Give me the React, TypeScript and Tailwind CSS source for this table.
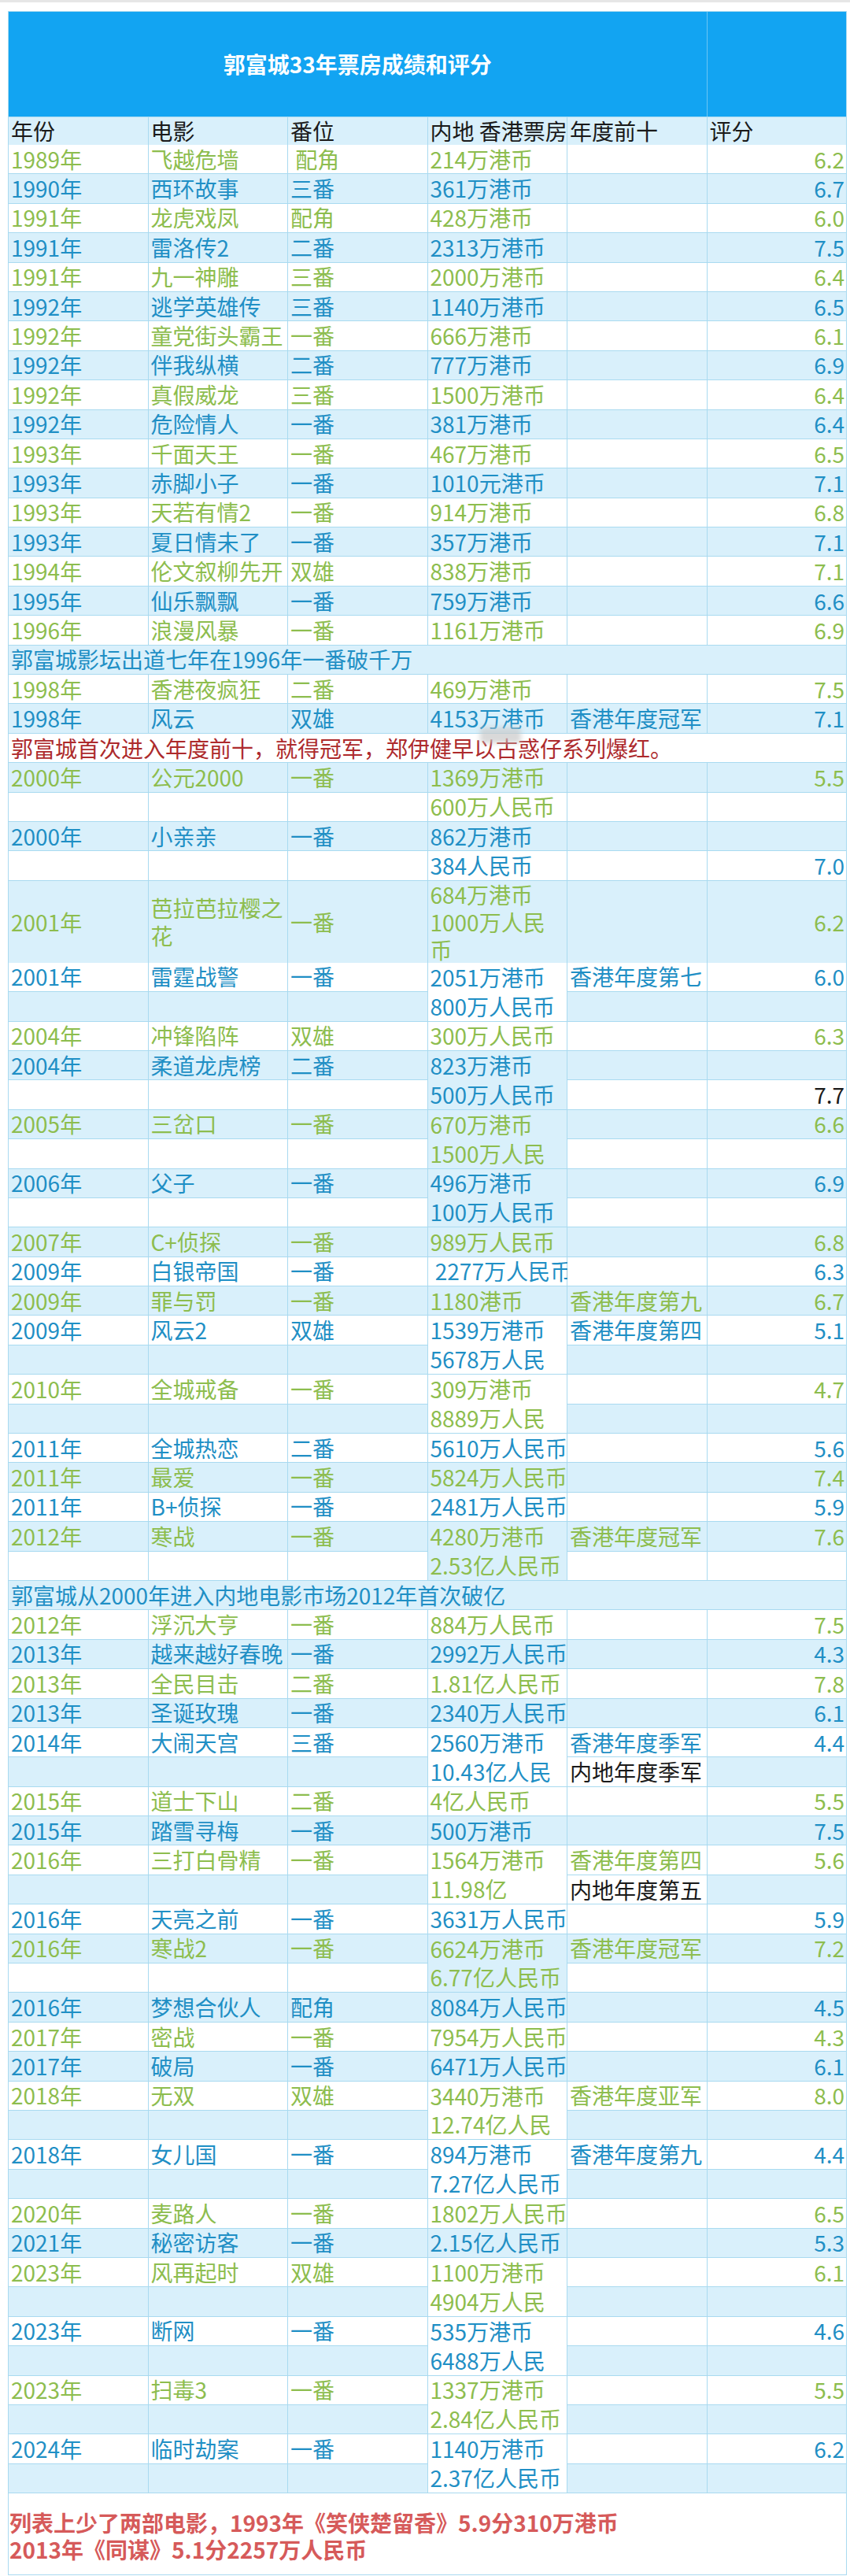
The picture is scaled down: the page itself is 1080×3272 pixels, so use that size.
import React from 'react';

type BgKey = 'w' | 'b';
type FgKey = 'g' | 'b' | 'k' | 'r';

const BG: Record<BgKey, string> = { w: 'bg-white', b: 'bg-[#d9f0fb]' };
const FG: Record<FgKey, string> = {
  g: 'text-[#8dbd4e]',
  b: 'text-[#1f8fc5]',
  k: 'text-[#1a1a1a]',
  r: 'text-[#ad2a2c]',
};

const CELL = 'flex items-center border-r border-b border-[#a9daf0] whitespace-pre';
const LEFT = 'pl-[3px]';
const RIGHT = 'justify-end pr-[2px]';

type RowBlock = { k: 'row'; c: string[]; bg: BgKey; fg: FgKey; tall?: boolean };
type NoteBlock = { k: 'note'; t: string; bg: BgKey; fg: FgKey; blur?: boolean };
type DoubleBlock = {
  k: 'double';
  c: string[];
  bg: BgKey;
  fg: FgKey;
  sub: string;
  subBg: BgKey;
  s5?: string;
  s6?: string;
  s5Bg?: BgKey;
  s5Fg?: FgKey;
  s6Fg?: FgKey;
};
type Block = RowBlock | NoteBlock | DoubleBlock;

const R = (c: string[], bg: BgKey, fg: FgKey): RowBlock => ({ k: 'row', c, bg, fg });
const D = (
  c: string[],
  bg: BgKey,
  fg: FgKey,
  sub: string,
  subBg: BgKey,
  extra: Partial<DoubleBlock> = {}
): DoubleBlock => ({ k: 'double', c, bg, fg, sub, subBg, ...extra });

const blocks: Block[] = [
  R(['1989年', '飞越危墙', ' 配角', '214万港币', '', '6.2'], 'w', 'g'),
  R(['1990年', '西环故事', '三番', '361万港币', '', '6.7'], 'b', 'b'),
  R(['1991年', '龙虎戏凤', '配角', '428万港币', '', '6.0'], 'w', 'g'),
  R(['1991年', '雷洛传2', '二番', '2313万港币', '', '7.5'], 'b', 'b'),
  R(['1991年', '九一神雕', '三番', '2000万港币', '', '6.4'], 'w', 'g'),
  R(['1992年', '逃学英雄传', '三番', '1140万港币', '', '6.5'], 'b', 'b'),
  R(['1992年', '童党街头霸王', '一番', '666万港币', '', '6.1'], 'w', 'g'),
  R(['1992年', '伴我纵横', '二番', '777万港币', '', '6.9'], 'b', 'b'),
  R(['1992年', '真假威龙', '三番', '1500万港币', '', '6.4'], 'w', 'g'),
  R(['1992年', '危险情人', '一番', '381万港币', '', '6.4'], 'b', 'b'),
  R(['1993年', '千面天王', '一番', '467万港币', '', '6.5'], 'w', 'g'),
  R(['1993年', '赤脚小子', '一番', '1010元港币', '', '7.1'], 'b', 'b'),
  R(['1993年', '天若有情2', '一番', '914万港币', '', '6.8'], 'w', 'g'),
  R(['1993年', '夏日情未了', '一番', '357万港币', '', '7.1'], 'b', 'b'),
  R(['1994年', '伦文叙柳先开', '双雄', '838万港币', '', '7.1'], 'w', 'g'),
  R(['1995年', '仙乐飘飘', '一番', '759万港币', '', '6.6'], 'b', 'b'),
  R(['1996年', '浪漫风暴', '一番', '1161万港币', '', '6.9'], 'w', 'g'),
  { k: 'note', t: '郭富城影坛出道七年在1996年一番破千万', bg: 'b', fg: 'b' },
  R(['1998年', '香港夜疯狂', '二番', '469万港币', '', '7.5'], 'w', 'g'),
  R(['1998年', '风云', '双雄', '4153万港币', '香港年度冠军', '7.1'], 'b', 'b'),
  { k: 'note', t: '郭富城首次进入年度前十，就得冠军，郑伊健早以古惑仔系列爆红。', bg: 'w', fg: 'r', blur: true },
  R(['2000年', '公元2000', '一番', '1369万港币', '', '5.5'], 'b', 'g'),
  R(['', '', '', '600万人民币', '', ''], 'w', 'g'),
  R(['2000年', '小亲亲', '一番', '862万港币', '', ''], 'b', 'b'),
  R(['', '', '', '384人民币', '', '7.0'], 'w', 'b'),
  { k: 'row', c: ['2001年', '芭拉芭拉樱之\n花', '一番', '684万港币\n1000万人民\n币', '', '6.2'], bg: 'b', fg: 'g', tall: true },
  D(['2001年', '雷霆战警', '一番', '2051万港币', '香港年度第七', '6.0'], 'w', 'b', '800万人民币', 'b'),
  R(['2004年', '冲锋陷阵', '双雄', '300万人民币', '', '6.3'], 'w', 'g'),
  D(['2004年', '柔道龙虎榜', '二番', '823万港币', '', ''], 'b', 'b', '500万人民币', 'w', { s6: '7.7', s6Fg: 'k' }),
  D(['2005年', '三岔口', '一番', '670万港币', '', '6.6'], 'b', 'g', '1500万人民', 'w'),
  D(['2006年', '父子', '一番', '496万港币', '', '6.9'], 'b', 'b', '100万人民币', 'w'),
  R(['2007年', 'C+侦探', '一番', '989万人民币', '', '6.8'], 'b', 'g'),
  R(['2009年', '白银帝国', '一番', ' 2277万人民币', '', '6.3'], 'w', 'b'),
  R(['2009年', '罪与罚', '一番', '1180港币', '香港年度第九', '6.7'], 'b', 'g'),
  D(['2009年', '风云2', '双雄', '1539万港币', '香港年度第四', '5.1'], 'w', 'b', '5678万人民', 'b'),
  D(['2010年', '全城戒备', '一番', '309万港币', '', '4.7'], 'w', 'g', '8889万人民', 'b'),
  R(['2011年', '全城热恋', '二番', '5610万人民币', '', '5.6'], 'w', 'b'),
  R(['2011年', '最爱', '一番', '5824万人民币', '', '7.4'], 'b', 'g'),
  R(['2011年', 'B+侦探', '一番', '2481万人民币', '', '5.9'], 'w', 'b'),
  D(['2012年', '寒战', '一番', '4280万港币', '香港年度冠军', '7.6'], 'b', 'g', '2.53亿人民币', 'w'),
  { k: 'note', t: '郭富城从2000年进入内地电影市场2012年首次破亿', bg: 'b', fg: 'b' },
  R(['2012年', '浮沉大亨', '一番', '884万人民币', '', '7.5'], 'w', 'g'),
  R(['2013年', '越来越好春晚', '一番', '2992万人民币', '', '4.3'], 'b', 'b'),
  R(['2013年', '全民目击', '二番', '1.81亿人民币', '', '7.8'], 'w', 'g'),
  R(['2013年', '圣诞玫瑰', '一番', '2340万人民币', '', '6.1'], 'b', 'b'),
  D(['2014年', '大闹天宫', '三番', '2560万港币', '香港年度季军', '4.4'], 'w', 'b', '10.43亿人民', 'b', {
    s5: '内地年度季军',
    s5Bg: 'w',
    s5Fg: 'k',
  }),
  R(['2015年', '道士下山', '二番', '4亿人民币', '', '5.5'], 'w', 'g'),
  R(['2015年', '踏雪寻梅', '一番', '500万港币', '', '7.5'], 'b', 'b'),
  D(['2016年', '三打白骨精', '一番', '1564万港币', '香港年度第四', '5.6'], 'w', 'g', '11.98亿', 'b', {
    s5: '内地年度第五',
    s5Bg: 'w',
    s5Fg: 'k',
  }),
  R(['2016年', '天亮之前', '一番', '3631万人民币', '', '5.9'], 'w', 'b'),
  D(['2016年', '寒战2', '一番', '6624万港币', '香港年度冠军', '7.2'], 'b', 'g', '6.77亿人民币', 'w'),
  R(['2016年', '梦想合伙人', '配角', '8084万人民币', '', '4.5'], 'b', 'b'),
  R(['2017年', '密战', '一番', '7954万人民币', '', '4.3'], 'w', 'g'),
  R(['2017年', '破局', '一番', '6471万人民币', '', '6.1'], 'b', 'b'),
  D(['2018年', '无双', '双雄', '3440万港币', '香港年度亚军', '8.0'], 'w', 'g', '12.74亿人民', 'b'),
  D(['2018年', '女儿国', '一番', '894万港币', '香港年度第九', '4.4'], 'w', 'b', '7.27亿人民币', 'b'),
  R(['2020年', '麦路人', '一番', '1802万人民币', '', '6.5'], 'w', 'g'),
  R(['2021年', '秘密访客', '一番', '2.15亿人民币', '', '5.3'], 'b', 'b'),
  D(['2023年', '风再起时', '双雄', '1100万港币', '', '6.1'], 'w', 'g', '4904万人民', 'b'),
  D(['2023年', '断网', '一番', '535万港币', '', '4.6'], 'w', 'b', '6488万人民', 'b'),
  D(['2023年', '扫毒3', '一番', '1337万港币', '', '5.5'], 'w', 'g', '2.84亿人民币', 'b'),
  D(['2024年', '临时劫案', '一番', '1140万港币', '', '6.2'], 'w', 'b', '2.37亿人民币', 'b'),
];

function Row({ b }: { b: RowBlock }) {
  return (
    <div className={`grid grid-cols-6 ${b.tall ? 'h-[104px] leading-[35px]' : 'h-[37.4px]'}`}>
      {b.c.map((t, i) => (
        <div key={i} className={`${CELL} ${i === 5 ? RIGHT : LEFT} ${BG[b.bg]} ${FG[b.fg]}`}>
          {t}
        </div>
      ))}
    </div>
  );
}

function Double({ b }: { b: DoubleBlock }) {
  const top = BG[b.bg];
  const sub = BG[b.subBg];
  const fg = FG[b.fg];
  return (
    <div className="grid grid-cols-6 grid-rows-[37.4px_37.4px]">
      <div className={`${CELL} ${LEFT} ${top} ${fg}`}>{b.c[0]}</div>
      <div className={`${CELL} ${LEFT} ${top} ${fg}`}>{b.c[1]}</div>
      <div className={`${CELL} ${LEFT} ${top} ${fg}`}>{b.c[2]}</div>
      <div className={`row-span-2 flex flex-col border-r border-b border-[#a9daf0] whitespace-pre ${top} ${fg}`}>
        <div className="flex flex-1 items-center pl-[3px]">{b.c[3]}</div>
        <div className="flex flex-1 items-center pl-[3px]">{b.sub}</div>
      </div>
      <div className={`${CELL} ${LEFT} ${top} ${fg}`}>{b.c[4]}</div>
      <div className={`${CELL} ${RIGHT} ${top} ${fg}`}>{b.c[5]}</div>
      <div className={`${CELL} ${LEFT} ${sub}`} />
      <div className={`${CELL} ${LEFT} ${sub}`} />
      <div className={`${CELL} ${LEFT} ${sub}`} />
      <div className={`${CELL} ${LEFT} ${BG[b.s5Bg ?? b.subBg]} ${FG[b.s5Fg ?? b.fg]}`}>{b.s5 ?? ''}</div>
      <div className={`${CELL} ${RIGHT} ${sub} ${FG[b.s6Fg ?? b.fg]}`}>{b.s6 ?? ''}</div>
    </div>
  );
}

function Note({ b }: { b: NoteBlock }) {
  return (
    <div className={`relative ${CELL} ${LEFT} h-[37.4px] ${BG[b.bg]} ${FG[b.fg]}`}>
      {b.t}
      {b.blur && (
        <div className="pointer-events-none absolute left-[599px] top-[-8px] h-[20px] w-[52px] rounded-sm bg-[#c9c9c9]/70 blur-[3px]" />
      )}
    </div>
  );
}

export default function App() {
  return (
    <div className="h-[3272px] w-[1080px] bg-white font-['Noto_Sans_CJK_SC','Noto_Sans',sans-serif] text-[28px] leading-[35px]">
      <div className="h-[3px] bg-[#e6e6e6]" />
      <div className="ml-[10px] mt-[11px] w-[1066px] border-l border-t border-[#a9daf0]">
        <div className="grid h-[134px] grid-cols-6 border-b border-[#a9daf0] bg-[#12a4f2]">
          <div className="col-span-5 flex items-center justify-center border-r border-[#6cc6f3] font-bold text-white">
            郭富城33年票房成绩和评分
          </div>
          <div className="border-r border-[#a9daf0]" />
        </div>
        <div className="grid h-[35px] grid-cols-6 bg-[#d9f0fb] text-[#1a1a1a]">
          {['年份', '电影', '番位', '内地 香港票房', '年度前十', '评分'].map((t, i) => (
            <div key={i} className={`${CELL} ${LEFT}`}>
              {t}
            </div>
          ))}
        </div>
        {blocks.map((b, i) =>
          b.k === 'row' ? <Row key={i} b={b} /> : b.k === 'double' ? <Double key={i} b={b} /> : <Note key={i} b={b} />
        )}
        <div className="h-[104px] border-r border-b border-[#a9daf0] pl-[1px] pt-[20px] font-semibold leading-[34px] text-[#d65a5a]">
          <div>列表上少了两部电影，1993年《笑侠楚留香》5.9分310万港币</div>
          <div>2013年《同谋》5.1分2257万人民币</div>
        </div>
      </div>
    </div>
  );
}
